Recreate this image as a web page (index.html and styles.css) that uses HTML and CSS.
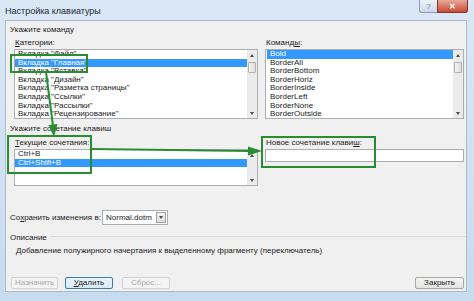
FILE: index.html
```html
<!DOCTYPE html>
<html lang="ru">
<head>
    <meta charset="UTF-8">
    <title>Настройка клавиатуры</title>
    <link rel="stylesheet" href="styles.css">
</head>
<body>
    <div class="window">
        <div class="titlebar">
            <span class="title">Настройка клавиатуры</span>
            <div class="caption">
                <span class="cap-help">?</span>
                <span class="cap-close">✕</span>
            </div>
        </div>
        <div class="client">
            <div class="heading">Укажите команду</div>
            <div class="pair">
                <div class="col left">
                    <div class="label"><u>К</u>атегории:</div>
                    <div class="listbox tall">
                        <ul class="items">
                            <li>Вкладка "Файл"</li>
                            <li class="selected">Вкладка "Главная"</li>
                            <li>Вкладка "Вставка"</li>
                            <li>Вкладка "Дизайн"</li>
                            <li>Вкладка "Разметка страницы"</li>
                            <li>Вкладка "Ссылки"</li>
                            <li>Вкладка "Рассылки"</li>
                            <li>Вкладка "Рецензирование"</li>
                        </ul>
                        <div class="scrollbar">
                            <span class="arrow up"></span>
                            <span class="thumb"></span>
                            <span class="arrow down"></span>
                        </div>
                    </div>
                </div>
                <div class="col right">
                    <div class="label">Команд<u>ы</u>:</div>
                    <div class="listbox tall">
                        <ul class="items">
                            <li class="selected">Bold</li>
                            <li>BorderAll</li>
                            <li>BorderBottom</li>
                            <li>BorderHoriz</li>
                            <li>BorderInside</li>
                            <li>BorderLeft</li>
                            <li>BorderNone</li>
                            <li>BorderOutside</li>
                        </ul>
                        <div class="scrollbar">
                            <span class="arrow up"></span>
                            <span class="thumb"></span>
                            <span class="arrow down"></span>
                        </div>
                    </div>
                </div>
            </div>

            <div class="heading second">Укажите сочетание клавиш</div>
            <div class="pair keys">
                <div class="col left">
                    <div class="label"><u>Т</u>екущие сочетания:</div>
                    <div class="listbox short">
                        <ul class="items">
                            <li>Ctrl+B</li>
                            <li class="selected">Ctrl+Shift+B</li>
                        </ul>
                        <div class="scrollbar">
                            <span class="arrow up"></span>
                            <span class="arrow down"></span>
                        </div>
                    </div>
                </div>
                <div class="col right">
                    <div class="label">Новое сочетание клави<u>ш</u>:</div>
                    <div class="textbox"></div>
                </div>
            </div>

            <div class="save-row">
                <span class="save-label">Со<u>х</u>ранить изменения в:</span>
                <div class="combo">
                    <span class="combo-text">Normal.dotm</span>
                    <span class="combo-btn"><span class="arrow down"></span></span>
                </div>
            </div>

            <div class="desc-heading"><span>Описание</span><span class="rule"></span></div>
            <div class="desc-text">Добавление полужирного начертания к выделенному фрагменту (переключатель)</div>

            <div class="buttons">
                <span class="btn disabled">Назначить</span>
                <span class="btn focus"><u>У</u>далить</span>
                <span class="btn disabled reset">Сброс...</span>
                <span class="btn close">Закрыть</span>
            </div>
        </div>

        <svg class="annotations" width="474" height="301" viewBox="0 0 474 301">
            <g fill="none" stroke="#2a8c30" stroke-width="2">
                <rect x="11" y="55" width="76" height="17"/>
                <rect x="8" y="136" width="83" height="37"/>
                <rect x="262" y="137" width="113" height="30"/>
                <line x1="46" y1="72" x2="53" y2="126"/>
                <line x1="91" y1="149" x2="250" y2="151"/>
            </g>
            <g fill="#2a8c30">
                <polygon points="48.5,125 57.5,124 54,137"/>
                <polygon points="248,146.5 248,155.5 262,151"/>
            </g>
        </svg>
    </div>
</body>
</html>
```

FILE: styles.css
```css
* {
    box-sizing: border-box;
}

body {
    margin: 0;
    width: 474px;
    height: 301px;
    overflow: hidden;
    font-family: 'Liberation Sans', Arial, sans-serif;
    font-size: 8px;
    color: #1b1b1b;
}

.window {
    position: relative;
    width: 474px;
    height: 301px;
    display: flex;
    flex-direction: column;
    background: linear-gradient(#dae7f5, #c7dbef);
}

.titlebar {
    height: 20px;
    display: flex;
    align-items: flex-start;
    padding-left: 5px;
}

.title {
    font-size: 9px;
    line-height: 9px;
    margin-top: 7px;
    color: #1e2a38;
}

.caption {
    margin-left: auto;
    margin-right: 6px;
    display: flex;
}

.cap-help, .cap-close {
    height: 13px;
    display: flex;
    justify-content: center;
    align-items: center;
    font-size: 8px;
}

.cap-help {
    width: 18px;
    color: #6f7f93;
    background: linear-gradient(#eef3f9, #cbd8e7);
    border: 1px solid #8c9db2;
    border-top: none;
    border-right: none;
    border-radius: 0 0 0 3px;
}

.cap-close {
    width: 31px;
    color: #fff;
    font-weight: bold;
    background: linear-gradient(#e7a899, #c84a36);
    border: 1px solid #83342a;
    border-top: none;
    border-radius: 0 0 3px 0;
}

.client {
    flex: 1;
    margin: 0 7px 9px 5px;
    background: #f0f0f0;
    border: 1px solid #a7bbd1;
    display: flex;
    flex-direction: column;
}

.heading {
    padding-left: 4px;
    height: 9px;
    line-height: 9px;
    margin-top: 4px;
}

.heading.second {
    margin-top: 5px;
}

.pair {
    display: flex;
    gap: 7px;
    padding: 0 2px 0 8px;
    margin-top: 4px;
}

.pair.keys {
    margin-top: 5px;
}

.col.left {
    width: 244px;
}

.col.right {
    flex: 1;
}

.label {
    height: 10px;
    line-height: 10px;
    padding-left: 1px;
}

.listbox {
    display: flex;
    margin-top: 1px;
    background: #fff;
    border: 1px solid #abadb3;
}

.listbox.tall {
    height: 70px;
}

.listbox.short {
    height: 37px;
}

.items {
    flex: 1;
    list-style: none;
    margin: 0;
    padding: 0;
    overflow: hidden;
}

.right .items {
    padding-left: 1px;
}

.items li {
    height: 8.6px;
    line-height: 8.6px;
    padding-left: 3px;
    white-space: nowrap;
}

.items li.selected {
    background: #3399ff;
    color: #fff;
}

.scrollbar {
    width: 10px;
    background: #ebebeb;
    display: flex;
    flex-direction: column;
    align-items: center;
}

.scrollbar .arrow {
    height: 10px;
}

.scrollbar .arrow.down {
    margin-top: auto;
}

.arrow {
    width: 5px;
    display: flex;
    justify-content: center;
    align-items: center;
}

.arrow::before {
    content: '';
    width: 0;
    height: 0;
    border-left: 2.5px solid transparent;
    border-right: 2.5px solid transparent;
}

.arrow.up::before {
    border-bottom: 3px solid #4a4a4a;
}

.arrow.down::before {
    border-top: 3px solid #4a4a4a;
}

.thumb {
    width: 8px;
    height: 11px;
    margin-top: 2px;
    border: 1px solid #b1b1b1;
    border-radius: 1px;
    background: linear-gradient(90deg, #f4f4f4, #dddddd);
}

.textbox {
    margin-top: 1px;
    height: 13px;
    background: #fff;
    border: 1px solid #abadb3;
}

.save-row {
    display: flex;
    align-items: center;
    margin-top: 24px;
    padding-left: 4px;
    height: 15px;
}

.save-label {
    width: 92px;
}

.combo {
    width: 66px;
    height: 15px;
    display: flex;
    background: #fff;
    border: 1px solid #abadb3;
}

.combo-text {
    flex: 1;
    line-height: 13px;
    padding-left: 3px;
}

.combo-btn {
    width: 10px;
    margin: 1px;
    display: flex;
    justify-content: center;
    align-items: center;
    border: 1px solid #a0a0a0;
    background: linear-gradient(#f4f4f4, #dcdcdc);
}

.desc-heading {
    display: flex;
    margin-top: 8px;
    height: 9px;
    line-height: 9px;
    padding-left: 4px;
}

.desc-heading .rule {
    flex: 1;
    height: 1px;
    margin: 3px 0 0 4px;
    background: #dcdcdc;
}

.desc-text {
    margin-top: 4px;
    height: 9px;
    line-height: 9px;
    padding-left: 10px;
}

.buttons {
    display: flex;
    margin-top: 22px;
    padding: 0 2px 0 5px;
}

.btn {
    width: 48px;
    height: 12px;
    line-height: 10px;
    text-align: center;
    border: 1px solid #a8a8a8;
    border-radius: 2px;
    background: linear-gradient(#f4f4f4, #e2e2e2);
    margin-right: 7px;
}

.btn:first-child {
    width: 47px;
}

.btn.disabled {
    color: #a6a6a6;
    border-color: #d2d2d2;
    background: #f4f4f4;
}

.btn.focus {
    border-color: #3d7bad;
    background: linear-gradient(#ecf5fc, #d7e9f6);
    margin-right: 9px;
}

.btn.close {
    width: 49px;
    margin: 0 0 0 auto;
}

.annotations {
    position: absolute;
    top: 0;
    left: 0;
    pointer-events: none;
}
```
